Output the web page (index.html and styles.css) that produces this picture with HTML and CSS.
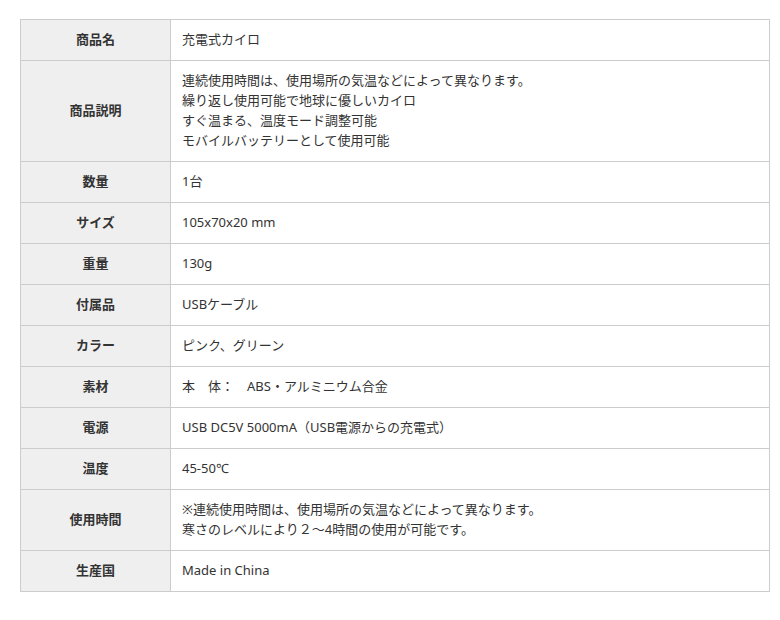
FILE: index.html
```html
<!DOCTYPE html>
<html lang="ja">
<head>
<meta charset="utf-8">
<link rel="stylesheet" href="styles.css">
</head>
<body>
<table class="spec">
  <tr><th>商品名</th><td>充電式カイロ</td></tr>
  <tr><th>商品説明</th><td>連続使用時間は、使用場所の気温などによって異なります。<br>繰り返し使用可能で地球に優しいカイロ<br>すぐ温まる、温度モード調整可能<br>モバイルバッテリーとして使用可能</td></tr>
  <tr><th>数量</th><td>1台</td></tr>
  <tr><th>サイズ</th><td>105x70x20 mm</td></tr>
  <tr><th>重量</th><td>130g</td></tr>
  <tr><th>付属品</th><td>USBケーブル</td></tr>
  <tr><th>カラー</th><td>ピンク、グリーン</td></tr>
  <tr><th>素材</th><td>本　体：　ABS・アルミニウム合金</td></tr>
  <tr><th>電源</th><td>USB DC5V 5000mA（USB電源からの充電式）</td></tr>
  <tr><th>温度</th><td>45-50℃</td></tr>
  <tr><th>使用時間</th><td>※連続使用時間は、使用場所の気温などによって異なります。<br>寒さのレベルにより２～4時間の使用が可能です。</td></tr>
  <tr><th>生産国</th><td>Made in China</td></tr>
</table>
</body>
</html>
```

FILE: styles.css
```css
html, body {
  margin: 0;
  background: #ffffff;
}
body {
  padding: 19px 10px 0 20px;
  font-family: "Noto Sans", "Noto Sans CJK JP", sans-serif;
  font-size: 13px;
  color: #333333;
}
.spec {
  width: 750px;
  border-collapse: collapse;
  border: 1px solid #cccccc;
}
.spec th,
.spec td {
  border: 1px solid #cccccc;
  padding: 9px 11px 11px;
  line-height: 20px;
  vertical-align: middle;
}
.spec th {
  width: 127px;
  background: #efefef;
  font-weight: bold;
  text-align: center;
}
.spec td {
  text-align: left;
  font-weight: normal;
}
```
